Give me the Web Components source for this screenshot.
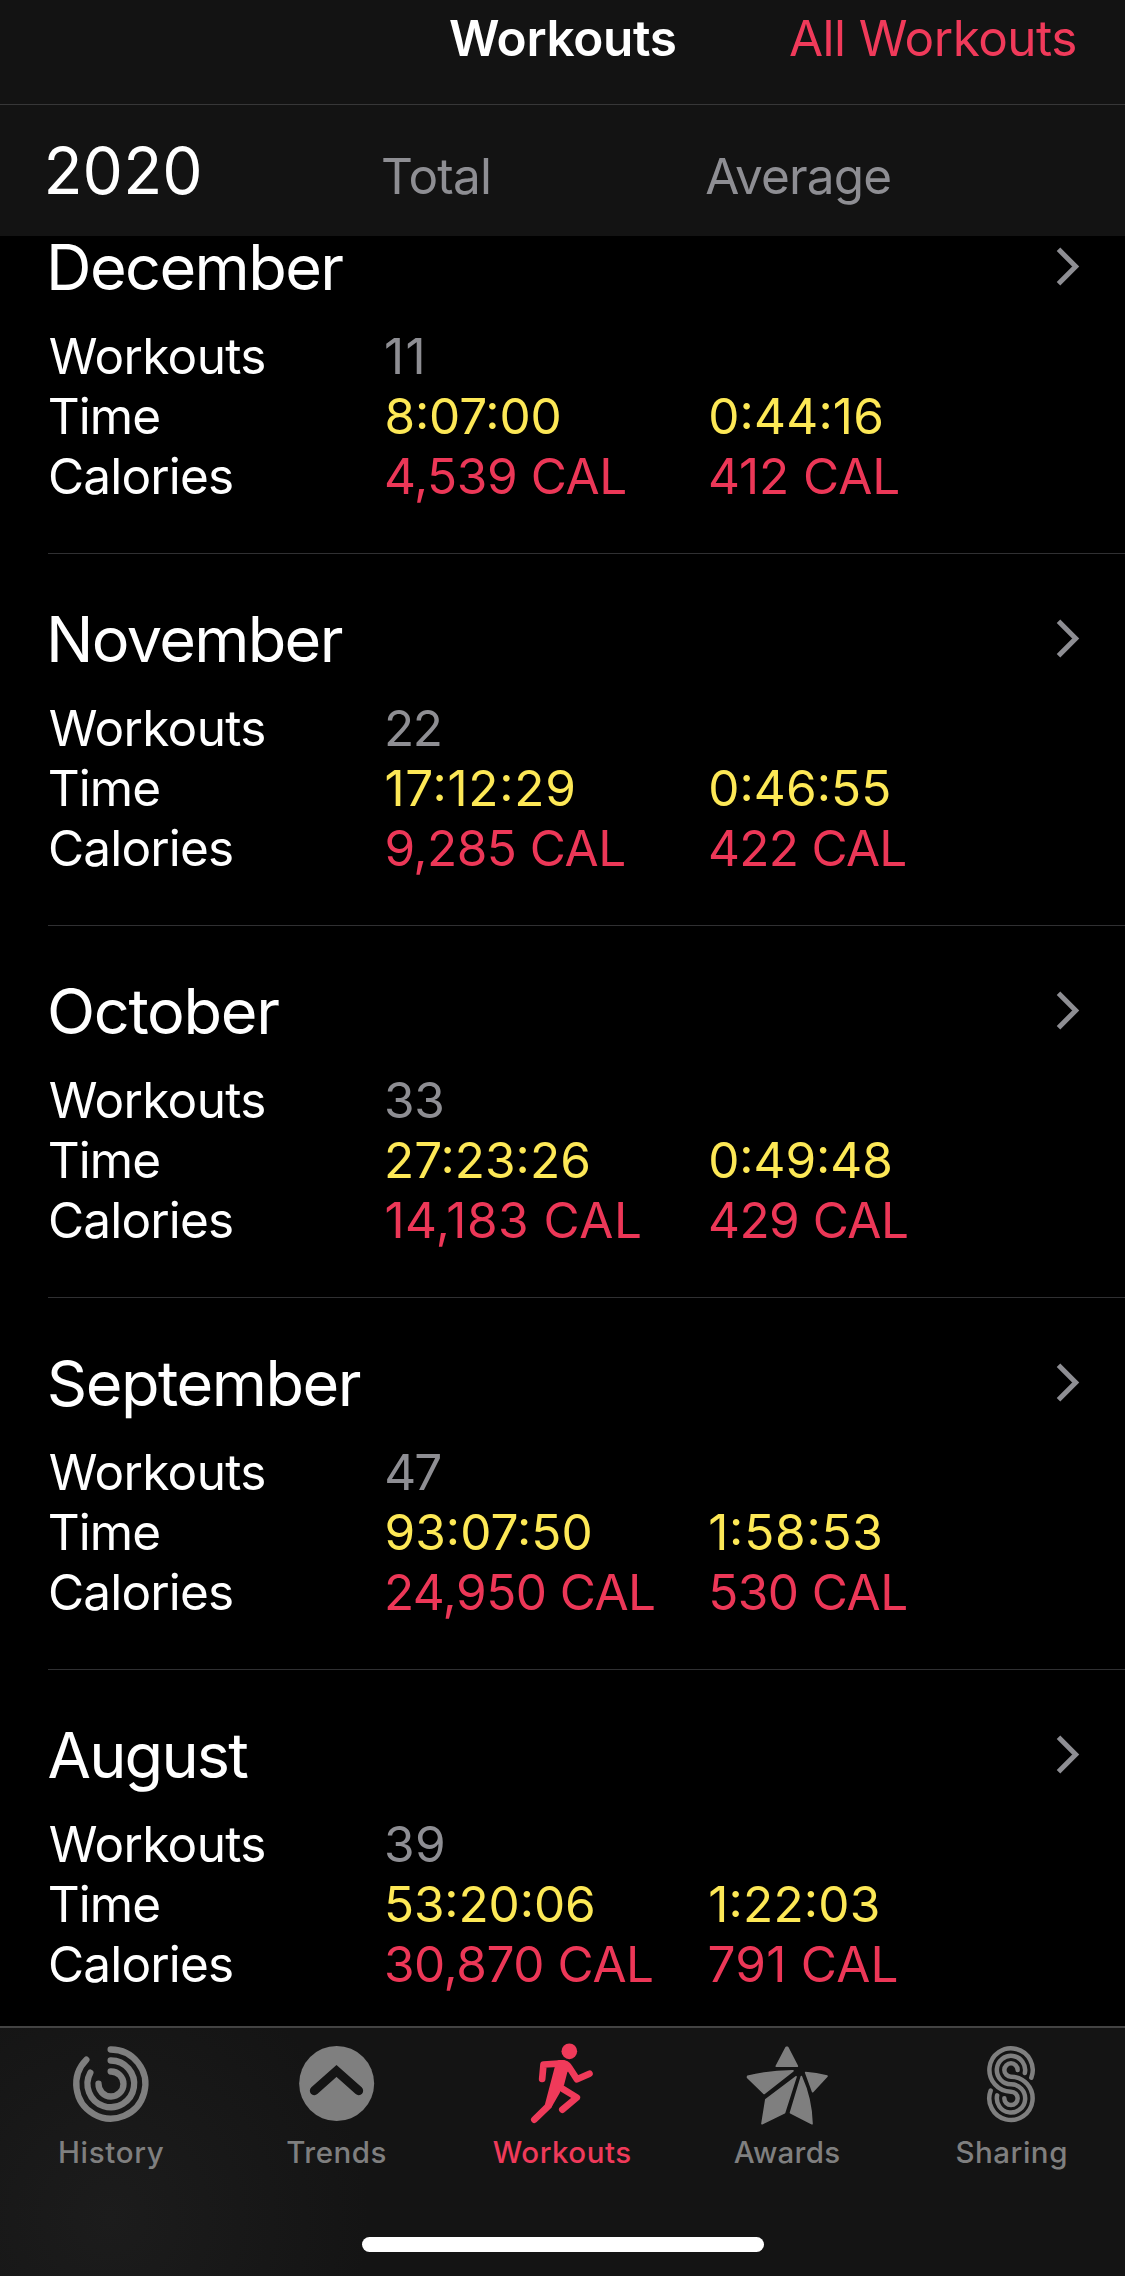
<!DOCTYPE html>
<html lang="en">
<head>
<meta charset="utf-8">
<title>Workouts</title>
<style>
  html, body { margin: 0; background: #000; }
  body { font-family: Inter, "Noto Sans", "Liberation Sans", sans-serif; color: #fff; }
</style>
</head>
<body>
<workouts-app></workouts-app>
<script>
const define = (tag, html, setup) => {
  const template = document.createElement('template');
  template.innerHTML = html;
  customElements.define(tag, class extends HTMLElement {
    connectedCallback() {
      if (this.shadowRoot) return;
      this.attachShadow({ mode: 'open' }).append(template.content.cloneNode(true));
      if (setup) setup(this, this.shadowRoot);
    }
  });
};

/* Text tracked so that its ink starts at `x` and is `w` wide. */
const ctx = document.createElement('canvas').getContext('2d');
define('fit-text', `<style>
  :host { display: block; white-space: pre; font-kerning: normal; }
</style><slot></slot>`, (host) => {
  const cs = getComputedStyle(host);
  ctx.font = `${cs.fontWeight} ${cs.fontSize} ${cs.fontFamily}`;
  ctx.letterSpacing = '0.01px';
  const text = host.textContent;
  const m = ctx.measureText(text);
  const ink = m.actualBoundingBoxRight + m.actualBoundingBoxLeft;
  const spacing = (Number(host.getAttribute('w')) - ink) / (text.length - 1);
  host.style.letterSpacing = spacing.toFixed(3) + 'px';
  host.style.marginLeft = (Number(host.getAttribute('x') || 0) + m.actualBoundingBoxLeft - 0.6).toFixed(2) + 'px';
});

define('nav-bar', `<style>
  :host { display: grid; grid-template-columns: 450px 340px 1fr; height: 105px; box-sizing: border-box;
    padding-top: 8px; line-height: 60px; font-size: 49.5px; background: #131313; border-bottom: 1px solid #373738; }
  .title { grid-column: 2; font-weight: 600; }
  .action { color: #f03a5a; }
</style>
<fit-text class="title" x="0.5" w="226">Workouts</fit-text>
<fit-text class="action" x="0.5" w="285.500">All Workouts</fit-text>`);

define('year-header', `<style>
  :host { display: grid; grid-template-columns: 383px 323px 1fr; align-items: baseline; height: 131px;
    box-sizing: border-box; padding-top: 26px; background: #131313; font-size: 49.5px; line-height: 80px; color: #8e8e93; }
  .year { font-size: 64px; color: #fff; }
</style>
<fit-text class="year" x="48" w="152">2020</fit-text>
<fit-text x="0.7" w="106">Total</fit-text>
<fit-text x="0.8" w="184">Average</fit-text>`);

define('month-card', `<style>
  :host { display: block; box-sizing: border-box; height: 372px; padding-top: 45px; margin-left: 48px;
    border-bottom: 1px solid #303032; flex: none; }
  :host([last]) { border-bottom: 0; }
  header { display: flex; justify-content: space-between; height: 80px; line-height: 80px; font-size: 63px; margin-bottom: 19px; }
  svg { width: 30px; height: 45px; margin: 17px 40px 0 0; fill: none; stroke: #8e8e93; stroke-width: 5; }
  .stats { display: grid; grid-template-columns: 338px 324px 1fr; grid-auto-rows: 60px; line-height: 60px; font-size: 49.5px; }
  .count { color: #8e8e93; }
  .time { color: #fde856; font-feature-settings: "case" 1; }
  .cal { color: #ec3757; }
</style>
<header></header>
<div class="stats"></div>`, (host, root) => {
  const item = (cls, [text, x, w]) => `<fit-text class="${cls}" x="${x}" w="${w}">${text}</fit-text>`;
  const d = JSON.parse(host.getAttribute('data'));
  root.querySelector('header').innerHTML = item('name', d.name) +
    '<svg viewBox="0 0 30 45"><path d="M3.500 5.3 20.700 22.5 3.500 39.700"/></svg>';
  root.querySelector('.stats').innerHTML =
    item('', ['Workouts', 2.4, 214.6]) + item('count', d.count) + '<span></span>' +
    item('', ['Time', 2.4, 109.5]) + item('time', d.time) + item('time', d.avgTime) +
    item('', ['Calories', 2.6, 182]) + item('cal', d.cal) + item('cal', d.avgCal);
});

define('tab-item', `<style>
  :host { display: block; width: 225px; height: 142px; color: #7f7f7f; font-size: 29.5px; font-weight: 500; line-height: 38px; }
  :host([active]) { color: #f03a5a; }
  ::slotted(svg) { display: block; width: 225px; height: 105px; fill: currentColor; }
</style>
<slot name="icon"></slot><slot></slot>`);

define('tab-bar', `<style>
  :host { display: flex; flex-direction: column; height: 250px; box-sizing: border-box; border-top: 2px solid #434343;
    background: radial-gradient(circle at 110px 190px, #1c1c1c 0, #141414 260px); }
  nav { display: flex; }
  .line { fill: none; stroke: currentColor; stroke-linecap: round; }
  .home { width: 402px; height: 15px; border-radius: 8px; background: #fff; margin: 67px 0 0 362px; }
</style>
<nav>
  <tab-item><svg slot="icon" viewBox="-120 54 675 315"><g class="line" stroke-width="19">
    <path d="M212 118.500A103.500 103.500 0 1 1 139 149"/>
    <path d="M212 151.500A70 70 0 1 1 151 188"/>
    <path d="M212 184.500A37.500 37.500 0 1 1 175.500 221"/></g></svg>
    <fit-text x="60.500" w="104">History</fit-text></tab-item>
  <tab-item><svg slot="icon" viewBox="-135 54 675 315"><circle cx="200" cy="220.500" r="112.500"/>
    <path class="line" style="stroke:#141414" stroke-width="27" d="M133 242 199.500 183 266 242"/></svg>
    <fit-text x="62.800" w="98.400">Trends</fit-text></tab-item>
  <tab-item active><svg slot="icon" viewBox="-90 54 675 315"><circle cx="268" cy="124" r="23.500"/>
    <g class="line" stroke-width="20" stroke-linejoin="round">
      <path d="M186.500 207 190.500 163.500 248 160"/>
      <path d="M240 160Q259 158 267 171L291 208 328.500 191"/>
      <path d="M242 233 290.500 262.500 247 299"/>
      <path d="M230 245 205 288 163 329"/></g>
    <path d="M224 172 194.500 284 214 293 232 246 252 226 262 187 276 170 250 152Z"/></svg>
    <fit-text x="43.300" w="137.600">Workouts</fit-text></tab-item>
  <tab-item><svg slot="icon" viewBox="-105 54 675 315"><g stroke="currentColor" stroke-width="5" stroke-linejoin="round">
      <path d="M231 112 233 112 262 168.500 199 168.500 228.500 112Z"/>
      <path d="M113 199Q175 183 249 182.500L162 250.500 112.500 202Z"/>
      <path d="M258 200.500 167.500 269 156 341 223.500 308.500Z"/>
      <path d="M274 200Q304 266 306 341L241.500 308Z"/>
      <path d="M287 187.500Q319 189 351 198.500L308 245Z"/></g></svg>
    <fit-text x="59.300" w="105.600">Awards</fit-text></tab-item>
  <tab-item><svg slot="icon" viewBox="-90 54 675 315"><g class="line" stroke-width="13.500">
      <path d="M304 203A65 65 0 1 0 243 245A20 20 0 1 1 223 265"/>
      <path d="M284.500 189A42.500 42.500 0 1 0 243 222.500A42.500 42.500 0 1 1 201.500 256"/>
      <path d="M263 180A20 20 0 1 0 243 200A65 65 0 1 1 182 242"/></g></svg>
    <fit-text x="57" w="109.800">Sharing</fit-text></tab-item>
</nav>
<div class="home"></div>`);

const months = [
  { name: ['December', 3.6, 292.4], count: ['11', .7, 35.500], time: ['8:07:00', 1, 173.2], avgTime: ['0:44:16', .8, 171], cal: ['4,539 CAL', .6, 239.4], avgCal: ['412 CAL', .6, 188.4] },
  { name: ['November', 3.6, 291.7], count: ['22', 1.5, 52.8], time: ['17:12:29', 1, 186.8], avgTime: ['0:46:55', .8, 179], cal: ['9,285 CAL', 1, 237.8], avgCal: ['422 CAL', .6, 195.4] },
  { name: ['October', 2.6, 229.2], count: ['33', 1.5, 55.3], time: ['27:23:26', 1.5, 201.3], avgTime: ['0:49:48', .8, 180], cal: ['14,183 CAL', 1, 253.6], avgCal: ['429 CAL', .6, 197] },
  { name: ['September', 2.4, 311], count: ['47', .8, 54], time: ['93:07:50', 1, 204.2], avgTime: ['1:58:53', .8, 170.2], cal: ['24,950 CAL', 1.5, 267.3], avgCal: ['530 CAL', 1.8, 195] },
  { name: ['August', 1.2, 199.6], count: ['39', 1.5, 56], time: ['53:20:06', 1.5, 206.2], avgTime: ['1:22:03', .8, 167.5], cal: ['30,870 CAL', 1.5, 265.3], avgCal: ['791 CAL', 0, 187.2] }
];

define('workouts-app', `<style>
  :host { display: flex; flex-direction: column; width: 1125px; height: 2276px; overflow: hidden; background: #000; }
  nav-bar, year-header, tab-bar { flex: none; }
  main { flex: 1; min-height: 0; }
  .list { display: flex; flex-direction: column; margin-top: -54px; }
</style>
<nav-bar></nav-bar><year-header></year-header>
<main><div class="list"></div></main>
<tab-bar></tab-bar>`, (host, root) => {
  const list = root.querySelector('.list');
  months.forEach((m, i) => {
    const card = document.createElement('month-card');
    card.setAttribute('data', JSON.stringify(m));
    card.toggleAttribute('last', i === months.length - 1);
    list.append(card);
  });
});
</script>
</body>
</html>
